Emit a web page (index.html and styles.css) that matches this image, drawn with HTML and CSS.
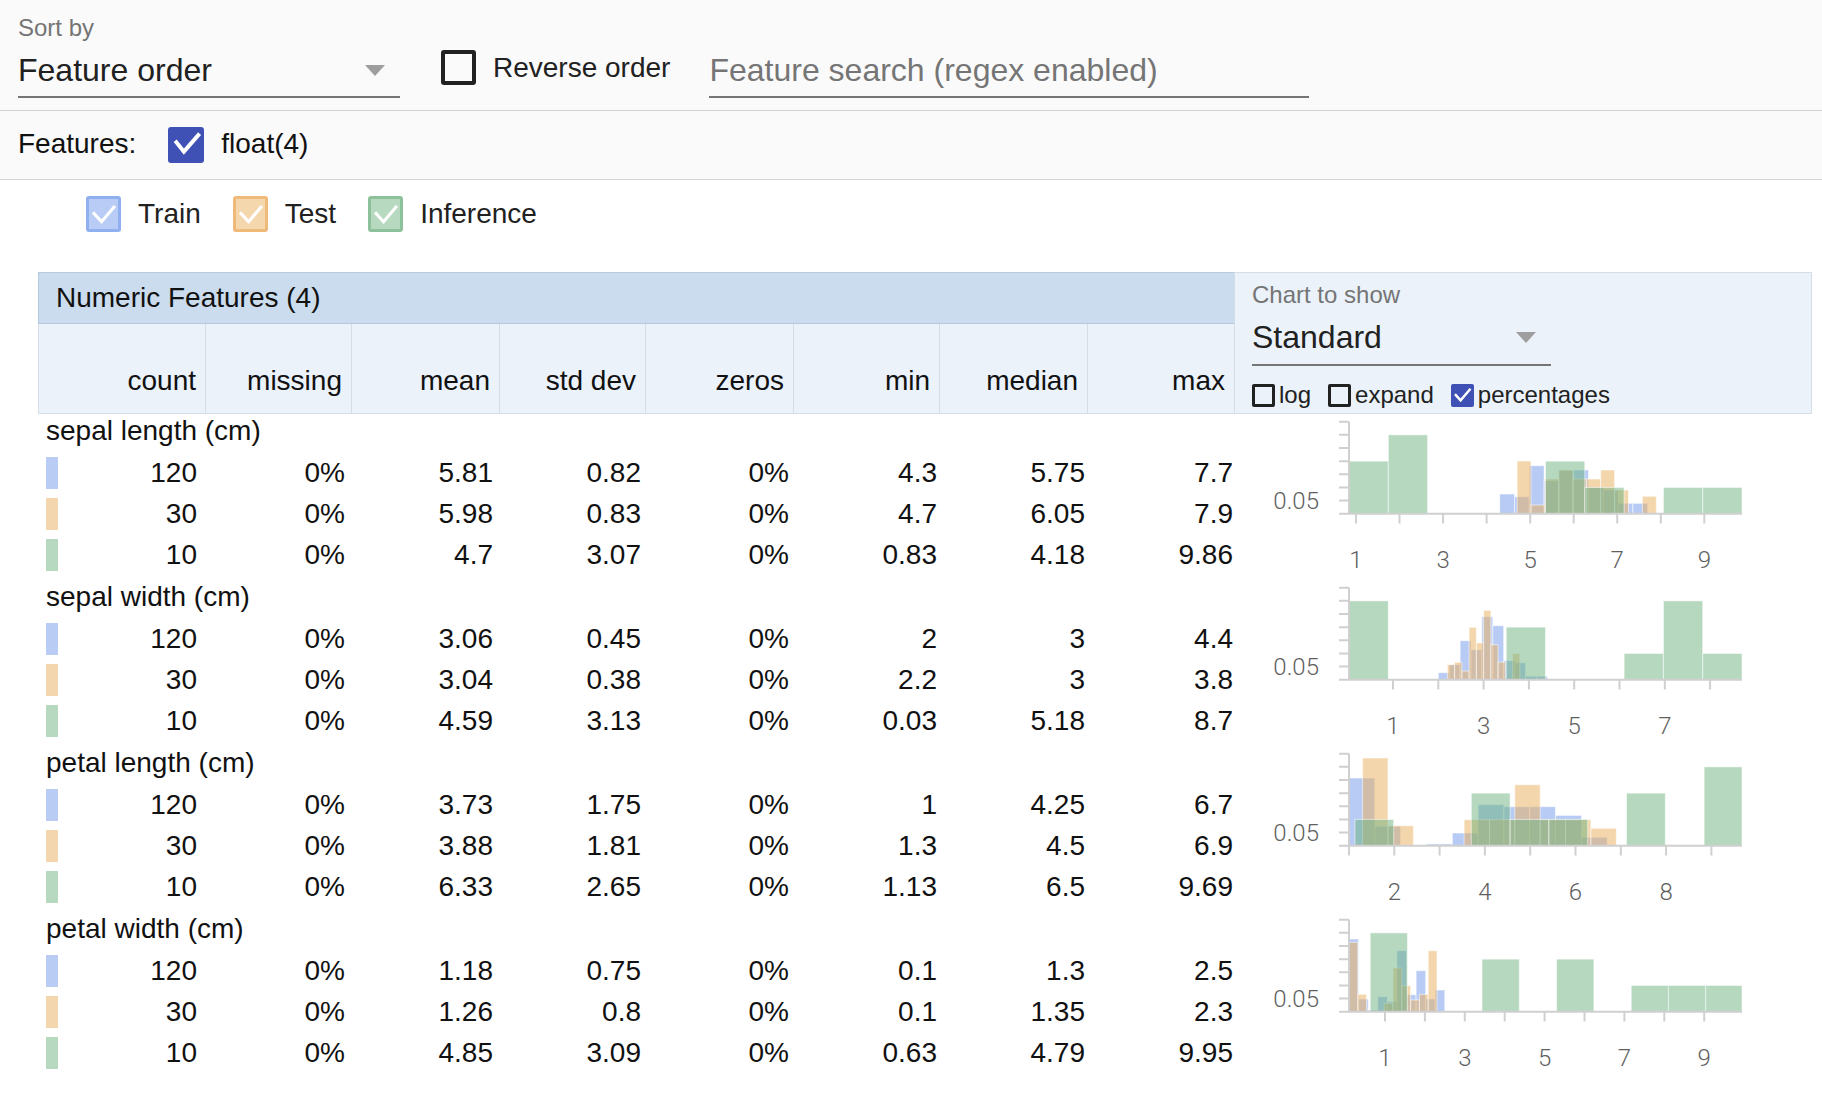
FILE: index.html
```html
<!DOCTYPE html>
<html>
<head>
<meta charset="utf-8">
<link rel="stylesheet" href="styles.css">
</head>
<body>
<div class="toolbar">
  <div class="dropdown">
    <div class="dd-label">Sort by</div>
    <div class="dd-input"><span>Feature order</span><span class="caret"></span></div>
  </div>
  <div class="cb-reverse"><span class="box"></span><span class="cb-text">Reverse order</span></div>
  <div class="search"><span class="placeholder">Feature search (regex enabled)</span></div>
</div>
<div class="features-row">
  <span class="features-label">Features:</span>
  <span class="box box-checked"><svg viewBox="0 0 24 24"><path d="M5.6 10.2 L10.6 16.4 L20.2 5.4"/></svg></span>
  <span class="features-type">float(4)</span>
</div>
<div class="legend">
  <div class="legend-item"><span class="lbox lbox-train"><svg viewBox="0 0 24 24"><path d="M4.2 11.6 L10.4 18.4 L20.6 6.4"/></svg></span>Train</div>
  <div class="legend-item"><span class="lbox lbox-test"><svg viewBox="0 0 24 24"><path d="M4.2 11.6 L10.4 18.4 L20.6 6.4"/></svg></span>Test</div>
  <div class="legend-item"><span class="lbox lbox-inf"><svg viewBox="0 0 24 24"><path d="M4.2 11.6 L10.4 18.4 L20.6 6.4"/></svg></span>Inference</div>
</div>

<div class="table">
  <div class="thead">
    <div class="thead-main">
      <div class="title">Numeric Features (4)</div>
      <div class="colheads">
        <div class="ch ch-first">count</div>
        <div class="ch ch-a">missing</div>
        <div class="ch ch-b">mean</div>
        <div class="ch ch-a">std dev</div>
        <div class="ch ch-b">zeros</div>
        <div class="ch ch-a">min</div>
        <div class="ch ch-b">median</div>
        <div class="ch ch-a ch-last">max</div>
      </div>
    </div>
    <div class="thead-chart">
      <div class="ct-label">Chart to show</div>
      <div class="ct-input"><span>Standard</span><span class="caret"></span></div>
      <div class="ct-opts">
        <span class="opt"><span class="sbox"></span>log</span>
        <span class="opt"><span class="sbox"></span>expand</span>
        <span class="opt"><span class="sbox sbox-checked"><svg viewBox="0 0 24 24"><path d="M5 11.5 L10 17 L19.5 6"/></svg></span>percentages</span>
      </div>
    </div>
  </div>

  <!-- sepal length -->
  <div class="feature">
    <div class="stats">
      <div class="fname">sepal length (cm)</div>
      <div class="row"><div class="cell cell-first"><span class="swatch sw-train"></span>120</div><div class="cell">0%</div><div class="cell">5.81</div><div class="cell">0.82</div><div class="cell">0%</div><div class="cell">4.3</div><div class="cell">5.75</div><div class="cell">7.7</div></div>
      <div class="row"><div class="cell cell-first"><span class="swatch sw-test"></span>30</div><div class="cell">0%</div><div class="cell">5.98</div><div class="cell">0.83</div><div class="cell">0%</div><div class="cell">4.7</div><div class="cell">6.05</div><div class="cell">7.9</div></div>
      <div class="row"><div class="cell cell-first"><span class="swatch sw-inf"></span>10</div><div class="cell">0%</div><div class="cell">4.7</div><div class="cell">3.07</div><div class="cell">0%</div><div class="cell">0.83</div><div class="cell">4.18</div><div class="cell">9.86</div></div>
    </div>
    <svg class="chart" width="578" height="166" viewBox="0 0 578 166">
      <g class="tr">
        <rect x="265.7" y="80" width="14.8" height="19.7"/>
        <rect x="280.5" y="82.7" width="14.8" height="17"/>
        <rect x="295.3" y="51.7" width="14.8" height="48"/>
        <rect x="310.1" y="66.7" width="14.8" height="33"/>
        <rect x="324.9" y="56" width="14.8" height="43.7"/>
        <rect x="339.7" y="56" width="14.8" height="43.7"/>
        <rect x="354.5" y="73.7" width="14.8" height="26"/>
        <rect x="369.3" y="76" width="14.8" height="23.7"/>
        <rect x="384.1" y="89.3" width="14.8" height="10.4"/>
        <rect x="398.9" y="89.3" width="14.8" height="10.4"/>
      </g>
      <g class="te">
        <rect x="283.1" y="47" width="13.9" height="52.7"/>
        <rect x="297" y="91" width="13.9" height="8.7"/>
        <rect x="310.9" y="65" width="13.9" height="34.7"/>
        <rect x="324.9" y="56" width="13.9" height="43.7"/>
        <rect x="338.8" y="65" width="13.9" height="34.7"/>
        <rect x="352.7" y="65" width="13.9" height="34.7"/>
        <rect x="366.7" y="56" width="13.9" height="43.7"/>
        <rect x="380.6" y="76" width="13.9" height="23.7"/>
        <rect x="408.4" y="82.3" width="13.9" height="17.4"/>
      </g>
      <g class="in">
        <rect x="115" y="47.14" width="39.3" height="52.56"/>
        <rect x="154.3" y="20.86" width="39.3" height="78.84"/>
        <rect x="311.5" y="47.14" width="39.3" height="52.56"/>
        <rect x="350.8" y="73.42" width="39.3" height="26.28"/>
        <rect x="429.4" y="73.42" width="39.3" height="26.28"/>
        <rect x="468.7" y="73.42" width="39.3" height="26.28"/>
      </g>
      <path class="axis" d="M115 7.7V99.7M105 99.7H508M105 86.56H115M105 73.42H115M105 60.28H115M105 47.14H115M105 34H115M105 20.86H115M105 7.72H115M122 99.7V109.4M165.5 99.7V109.4M209.1 99.7V109.4M252.6 99.7V109.4M296.2 99.7V109.4M339.7 99.7V109.4M383.2 99.7V109.4M426.8 99.7V109.4M470.3 99.7V109.4"/>
      <text class="yl" x="85" y="94.8">0.05</text>
      <text class="xl" x="122" y="153.5">1</text>
      <text class="xl" x="209.1" y="153.5">3</text>
      <text class="xl" x="296.2" y="153.5">5</text>
      <text class="xl" x="383.2" y="153.5">7</text>
      <text class="xl" x="470.3" y="153.5">9</text>
    </svg>
  </div>

  <!-- sepal width -->
  <div class="feature">
    <div class="stats">
      <div class="fname">sepal width (cm)</div>
      <div class="row"><div class="cell cell-first"><span class="swatch sw-train"></span>120</div><div class="cell">0%</div><div class="cell">3.06</div><div class="cell">0.45</div><div class="cell">0%</div><div class="cell">2</div><div class="cell">3</div><div class="cell">4.4</div></div>
      <div class="row"><div class="cell cell-first"><span class="swatch sw-test"></span>30</div><div class="cell">0%</div><div class="cell">3.04</div><div class="cell">0.38</div><div class="cell">0%</div><div class="cell">2.2</div><div class="cell">3</div><div class="cell">3.8</div></div>
      <div class="row"><div class="cell cell-first"><span class="swatch sw-inf"></span>10</div><div class="cell">0%</div><div class="cell">4.59</div><div class="cell">3.13</div><div class="cell">0%</div><div class="cell">0.03</div><div class="cell">5.18</div><div class="cell">8.7</div></div>
    </div>
    <svg class="chart" width="578" height="166" viewBox="0 0 578 166">
      <g class="tr">
        <rect x="204.3" y="92.7" width="10.9" height="7"/>
        <rect x="215.2" y="84.7" width="10.9" height="15"/>
        <rect x="226.1" y="60.7" width="10.9" height="39"/>
        <rect x="237" y="69.7" width="10.9" height="30"/>
        <rect x="247.9" y="36.7" width="10.9" height="63"/>
        <rect x="258.8" y="45.7" width="10.9" height="54"/>
        <rect x="269.7" y="80.7" width="10.9" height="19"/>
        <rect x="280.6" y="82.7" width="10.9" height="17"/>
        <rect x="291.5" y="96.2" width="10.9" height="3.5"/>
        <rect x="302.4" y="96.2" width="10.9" height="3.5"/>
      </g>
      <g class="te">
        <rect x="213.4" y="84.7" width="7.24" height="15"/>
        <rect x="220.6" y="82.2" width="7.24" height="17.5"/>
        <rect x="227.9" y="91" width="7.24" height="8.7"/>
        <rect x="235.1" y="47.3" width="7.24" height="52.4"/>
        <rect x="242.4" y="63" width="7.24" height="36.7"/>
        <rect x="249.6" y="30.3" width="7.24" height="69.4"/>
        <rect x="256.8" y="64.7" width="7.24" height="35"/>
        <rect x="264.1" y="82.2" width="7.24" height="17.5"/>
        <rect x="278.6" y="73.7" width="7.24" height="26"/>
      </g>
      <g class="in">
        <rect x="115" y="20.86" width="39.3" height="78.84"/>
        <rect x="272.2" y="47.14" width="39.3" height="52.56"/>
        <rect x="390.1" y="73.42" width="39.3" height="26.28"/>
        <rect x="429.4" y="20.86" width="39.3" height="78.84"/>
        <rect x="468.7" y="73.42" width="39.3" height="26.28"/>
      </g>
      <path class="axis" d="M115 7.7V99.7M105 99.7H508M105 86.56H115M105 73.42H115M105 60.28H115M105 47.14H115M105 34H115M105 20.86H115M105 7.72H115M159 99.7V109.4M204.3 99.7V109.4M249.6 99.7V109.4M294.9 99.7V109.4M340.2 99.7V109.4M385.5 99.7V109.4M430.8 99.7V109.4M476.1 99.7V109.4"/>
      <text class="yl" x="85" y="94.8">0.05</text>
      <text class="xl" x="159" y="153.5">1</text>
      <text class="xl" x="249.6" y="153.5">3</text>
      <text class="xl" x="340.2" y="153.5">5</text>
      <text class="xl" x="430.8" y="153.5">7</text>
    </svg>
  </div>

  <!-- petal length -->
  <div class="feature">
    <div class="stats">
      <div class="fname">petal length (cm)</div>
      <div class="row"><div class="cell cell-first"><span class="swatch sw-train"></span>120</div><div class="cell">0%</div><div class="cell">3.73</div><div class="cell">1.75</div><div class="cell">0%</div><div class="cell">1</div><div class="cell">4.25</div><div class="cell">6.7</div></div>
      <div class="row"><div class="cell cell-first"><span class="swatch sw-test"></span>30</div><div class="cell">0%</div><div class="cell">3.88</div><div class="cell">1.81</div><div class="cell">0%</div><div class="cell">1.3</div><div class="cell">4.5</div><div class="cell">6.9</div></div>
      <div class="row"><div class="cell cell-first"><span class="swatch sw-inf"></span>10</div><div class="cell">0%</div><div class="cell">6.33</div><div class="cell">2.65</div><div class="cell">0%</div><div class="cell">1.13</div><div class="cell">6.5</div><div class="cell">9.69</div></div>
    </div>
    <svg class="chart" width="578" height="166" viewBox="0 0 578 166">
      <g class="tr">
        <rect x="115" y="32" width="25.8" height="67.7"/>
        <rect x="140.8" y="80.3" width="25.8" height="19.4"/>
        <rect x="192.5" y="98" width="25.8" height="1.7"/>
        <rect x="218.3" y="87" width="25.8" height="12.7"/>
        <rect x="244.1" y="58.7" width="25.8" height="41"/>
        <rect x="269.9" y="60.7" width="25.8" height="39"/>
        <rect x="295.7" y="60.7" width="25.8" height="39"/>
        <rect x="321.6" y="69.4" width="25.8" height="30.3"/>
        <rect x="347.4" y="91.3" width="25.8" height="8.4"/>
      </g>
      <g class="te">
        <rect x="128.6" y="12" width="25.4" height="87.7"/>
        <rect x="154" y="79.7" width="25.4" height="20"/>
        <rect x="230.1" y="73.7" width="25.4" height="26"/>
        <rect x="255.4" y="73.7" width="25.4" height="26"/>
        <rect x="280.8" y="38.7" width="25.4" height="61"/>
        <rect x="306.2" y="73.7" width="25.4" height="26"/>
        <rect x="331.5" y="73.7" width="25.4" height="26"/>
        <rect x="356.9" y="82.3" width="25.4" height="17.4"/>
      </g>
      <g class="in">
        <rect x="120.9" y="73.42" width="38.8" height="26.28"/>
        <rect x="237.3" y="47.14" width="38.8" height="52.56"/>
        <rect x="276.1" y="73.42" width="38.8" height="26.28"/>
        <rect x="314.9" y="73.42" width="38.8" height="26.28"/>
        <rect x="392.5" y="47.14" width="38.8" height="52.56"/>
        <rect x="470.1" y="20.86" width="37.9" height="78.84"/>
      </g>
      <path class="axis" d="M115 7.7V99.7M105 99.7H508M105 86.56H115M105 73.42H115M105 60.28H115M105 47.14H115M105 34H115M105 20.86H115M105 7.72H115M115 99.7V109.4M160.3 99.7V109.4M205.6 99.7V109.4M250.9 99.7V109.4M296.2 99.7V109.4M341.5 99.7V109.4M386.8 99.7V109.4M432.1 99.7V109.4M477.4 99.7V109.4"/>
      <text class="yl" x="85" y="94.8">0.05</text>
      <text class="xl" x="160.3" y="153.5">2</text>
      <text class="xl" x="250.9" y="153.5">4</text>
      <text class="xl" x="341.5" y="153.5">6</text>
      <text class="xl" x="432.1" y="153.5">8</text>
    </svg>
  </div>

  <!-- petal width -->
  <div class="feature">
    <div class="stats">
      <div class="fname">petal width (cm)</div>
      <div class="row"><div class="cell cell-first"><span class="swatch sw-train"></span>120</div><div class="cell">0%</div><div class="cell">1.18</div><div class="cell">0.75</div><div class="cell">0%</div><div class="cell">0.1</div><div class="cell">1.3</div><div class="cell">2.5</div></div>
      <div class="row"><div class="cell cell-first"><span class="swatch sw-test"></span>30</div><div class="cell">0%</div><div class="cell">1.26</div><div class="cell">0.8</div><div class="cell">0%</div><div class="cell">0.1</div><div class="cell">1.35</div><div class="cell">2.3</div></div>
      <div class="row"><div class="cell cell-first"><span class="swatch sw-inf"></span>10</div><div class="cell">0%</div><div class="cell">4.85</div><div class="cell">3.09</div><div class="cell">0%</div><div class="cell">0.63</div><div class="cell">4.79</div><div class="cell">9.95</div></div>
    </div>
    <svg class="chart" width="578" height="166" viewBox="0 0 578 166">
      <g class="tr">
        <rect x="115" y="27" width="9.6" height="72.7"/>
        <rect x="124.6" y="87" width="9.6" height="12.7"/>
        <rect x="134.2" y="98" width="9.6" height="1.7"/>
        <rect x="143.7" y="84.7" width="9.6" height="15"/>
        <rect x="153.3" y="89.7" width="9.6" height="10"/>
        <rect x="162.9" y="38.7" width="9.6" height="61"/>
        <rect x="172.5" y="82.7" width="9.6" height="17"/>
        <rect x="182.1" y="58.7" width="9.6" height="41"/>
        <rect x="191.6" y="87" width="9.6" height="12.7"/>
        <rect x="201.2" y="78" width="9.6" height="21.7"/>
      </g>
      <g class="te">
        <rect x="115" y="30.3" width="8.8" height="69.4"/>
        <rect x="123.8" y="82.3" width="8.8" height="17.4"/>
        <rect x="150.2" y="91.3" width="8.8" height="8.4"/>
        <rect x="159" y="56" width="8.8" height="43.7"/>
        <rect x="167.8" y="73.7" width="8.8" height="26"/>
        <rect x="176.6" y="88" width="8.8" height="11.7"/>
        <rect x="185.4" y="82.3" width="8.8" height="17.4"/>
        <rect x="194.2" y="38.7" width="8.8" height="61"/>
      </g>
      <g class="in">
        <rect x="136.2" y="20.86" width="37.3" height="78.84"/>
        <rect x="248" y="47.14" width="37.3" height="52.56"/>
        <rect x="322.6" y="47.14" width="37.3" height="52.56"/>
        <rect x="397.2" y="73.42" width="37.3" height="26.28"/>
        <rect x="434.4" y="73.42" width="37.3" height="26.28"/>
        <rect x="471.7" y="73.42" width="36.3" height="26.28"/>
      </g>
      <path class="axis" d="M115 7.7V99.7M105 99.7H508M105 86.56H115M105 73.42H115M105 60.28H115M105 47.14H115M105 34H115M105 20.86H115M105 7.72H115M151 99.7V109.4M190.9 99.7V109.4M230.8 99.7V109.4M270.7 99.7V109.4M310.6 99.7V109.4M350.5 99.7V109.4M390.4 99.7V109.4M430.3 99.7V109.4M470.2 99.7V109.4"/>
      <text class="yl" x="85" y="94.8">0.05</text>
      <text class="xl" x="151" y="153.5">1</text>
      <text class="xl" x="230.8" y="153.5">3</text>
      <text class="xl" x="310.6" y="153.5">5</text>
      <text class="xl" x="390.4" y="153.5">7</text>
      <text class="xl" x="470.2" y="153.5">9</text>
    </svg>
  </div>
</div>
</body>
</html>
```

FILE: styles.css
```css
html, body {
  margin: 0;
  padding: 0;
  background: #ffffff;
}
body {
  font-family: "Liberation Sans", Arial, sans-serif;
  color: #111111;
  width: 1822px;
  overflow: hidden;
}

/* ---------- toolbar ---------- */
.toolbar {
  display: flex;
  align-items: flex-start;
  height: 110px;
  padding-left: 18px;
  background: #fafafa;
  border-bottom: 1px solid #d2d2d2;
}
.dropdown {
  width: 382px;
  padding-top: 14px;
}
.dd-label {
  font-size: 24px;
  line-height: 28px;
  color: #757575;
}
.dd-input {
  margin-top: 8px;
  display: flex;
  align-items: center;
  justify-content: space-between;
  font-size: 32px;
  line-height: 40px;
  color: #212121;
  padding-right: 15px;
  padding-bottom: 6px;
  border-bottom: 2px solid #757575;
}
.caret {
  width: 0;
  height: 0;
  border-left: 10px solid transparent;
  border-right: 10px solid transparent;
  border-top: 11px solid #9e9e9e;
}
.cb-reverse {
  display: flex;
  align-items: center;
  margin-left: 41px;
  margin-top: 50px;
  height: 35px;
}
.box {
  box-sizing: border-box;
  width: 35px;
  height: 35px;
  border: 4px solid #212121;
  border-radius: 3px;
  display: inline-block;
  flex: none;
}
.cb-text {
  margin-left: 17px;
  font-size: 28px;
  line-height: 32px;
  color: #212121;
}
.search {
  margin-left: 39px;
  width: 600px;
  padding-top: 50px;
  padding-bottom: 6px;
  border-bottom: 2px solid #757575;
  font-size: 32px;
  line-height: 40px;
  color: #757575;
}

/* ---------- features row ---------- */
.features-row {
  display: flex;
  align-items: center;
  height: 68px;
  padding-left: 18px;
  background: #fafafa;
  border-bottom: 1px solid #d2d2d2;
  font-size: 28px;
  line-height: 32px;
  color: #111;
}
.features-label,
.features-type {
  position: relative;
  top: -1px;
}
.box-checked {
  width: 36px;
  height: 36px;
  margin-left: 32px;
  border: none;
  background: #3f51b5;
}
.box-checked svg,
.lbox svg,
.sbox-checked svg {
  display: block;
  width: 100%;
  height: 100%;
}
.box-checked svg path,
.lbox svg path,
.sbox-checked svg path {
  fill: none;
  stroke: #ffffff;
  stroke-width: 2.6;
  stroke-linecap: square;
  stroke-linejoin: miter;
}
.features-type {
  margin-left: 17px;
}

/* ---------- legend ---------- */
.legend {
  display: flex;
  gap: 32px;
  padding: 16px 0 0 86px;
  height: 36px;
  font-size: 28px;
  line-height: 32px;
  color: #212121;
}
.legend-item {
  display: flex;
  align-items: center;
}
.lbox {
  box-sizing: border-box;
  width: 35px;
  height: 36px;
  border-radius: 3px;
  border: 3px solid;
  margin-right: 17px;
}
.lbox-train { background: #b9ccf5; border-color: #8fafef; }
.lbox-test  { background: #f5d7ae; border-color: #eeb979; }
.lbox-inf   { background: #b6d9c0; border-color: #8dc19b; }

/* ---------- table ---------- */
.table {
  margin: 40px 0 0 38px;
  width: 1774px;
}
.thead {
  display: flex;
}
.thead-main {
  width: 1196px;
}
.title {
  box-sizing: border-box;
  height: 52px;
  background: #cbdcee;
  border-top: 1px solid #b7c9df;
  border-bottom: 1px solid #b7c9df;
  border-left: 1px solid #b7c9df;
  padding-left: 17px;
  font-size: 28px;
  line-height: 50px;
  color: #111;
}
.colheads {
  box-sizing: border-box;
  display: flex;
  height: 90px;
  background: #ebf2fa;
  border-left: 1px solid #d5dde8;
  border-bottom: 1px solid #d5dde8;
}
.ch {
  box-sizing: border-box;
  display: flex;
  align-items: flex-end;
  justify-content: flex-end;
  padding: 0 9px 16px 0;
  border-right: 1px solid #d5dde8;
  font-size: 28px;
  line-height: 32px;
  color: #111;
}
.ch-first { width: 167px; }
.ch-a { width: 146px; }
.ch-b { width: 148px; }
.ch-last { border-right: none; }

.thead-chart {
  box-sizing: border-box;
  width: 578px;
  height: 142px;
  background: #ebf2fa;
  border: 1px solid #d5dde8;
  padding: 8px 0 0 17px;
}
.ct-label {
  font-size: 24px;
  line-height: 28px;
  color: #757575;
}
.ct-input {
  box-sizing: border-box;
  width: 299px;
  margin-top: 8px;
  display: flex;
  align-items: center;
  justify-content: space-between;
  padding: 0 15px 7px 0;
  border-bottom: 2px solid #757575;
  font-size: 32px;
  line-height: 40px;
  color: #212121;
}
.ct-opts {
  display: flex;
  gap: 17px;
  margin-top: 15px;
  font-size: 24px;
  line-height: 28px;
  color: #212121;
}
.opt {
  display: flex;
  align-items: center;
}
.sbox {
  box-sizing: border-box;
  width: 23px;
  height: 23px;
  border: 3px solid #212121;
  border-radius: 2px;
  margin-right: 4px;
}
.sbox-checked {
  border: none;
  background: #3f51b5;
}

/* ---------- feature blocks ---------- */
.feature {
  display: grid;
  grid-template-columns: 1196px 578px;
  height: 166px;
}
.fname {
  height: 38px;
  line-height: 34px;
  padding-left: 8px;
  font-size: 28px;
  color: #111;
}
.row {
  display: grid;
  grid-template-columns: 160px repeat(7, 148px);
  height: 41px;
  font-size: 28px;
  line-height: 41px;
  color: #111;
}
.cell {
  text-align: right;
  padding-right: 1px;
}
.cell-first {
  display: flex;
  align-items: center;
  justify-content: space-between;
  padding-left: 8px;
}
.swatch {
  width: 12px;
  height: 32px;
  display: block;
}
.sw-train { background: #b9ccf4; }
.sw-test { background: #f4d6ae; }
.sw-inf { background: #b6d9c0; }

.chart {
  display: block;
}
.chart rect {
  stroke: #ffffff;
  stroke-opacity: 0.55;
  stroke-width: 1;
}
.tr rect { fill: #7197eb; fill-opacity: 0.5; }
.te rect { fill: #e9ad5b; fill-opacity: 0.5; }
.in rect { fill: #6bb17f; fill-opacity: 0.5; }
.axis {
  fill: none;
  stroke: #d0d0d0;
  stroke-width: 2;
}
.yl, .xl {
  font-family: Roboto, "Liberation Sans", sans-serif;
  font-weight: 300;
  font-size: 24px;
  fill: #5f5f5f;
}
.yl { text-anchor: end; }
.xl { text-anchor: middle; }
```
